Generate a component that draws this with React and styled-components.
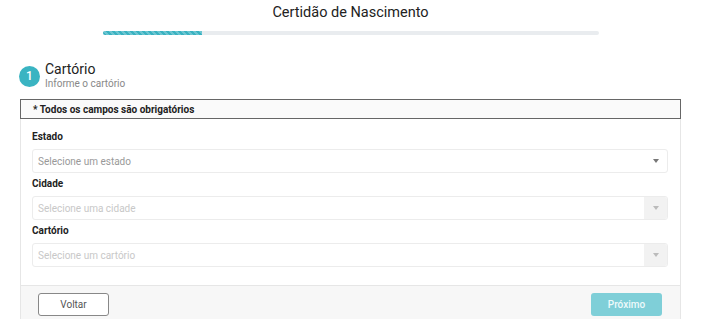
import React from 'react'
import styled, { createGlobalStyle } from 'styled-components'

const GlobalStyle = createGlobalStyle`
  body {
    margin: 0;
    background: #fff;
    font-family: Roboto, "Liberation Sans", Arial, sans-serif;
    color: #333;
  }
`;

const fields = [
  { label: 'Estado', placeholder: 'Selecione um estado', disabled: false },
  { label: 'Cidade', placeholder: 'Selecione uma cidade', disabled: true },
  { label: 'Cartório', placeholder: 'Selecione um cartório', disabled: true },
];

const App = () => {
  return (
    <Page>
      <GlobalStyle />
      <Title>Certidão de Nascimento</Title>
      <Progress>
        <ProgressFill percent={20} />
      </Progress>

      <StepHeader>
        <StepNumber>1</StepNumber>
        <StepText>
          <StepTitle>Cartório</StepTitle>
          <StepSubtitle>Informe o cartório</StepSubtitle>
        </StepText>
      </StepHeader>

      <Panel>
        <Required>* Todos os campos são obrigatórios</Required>
        <PanelBody>
          {fields.map((f) => (
            <Field key={f.label}>
              <Label>{f.label}</Label>
              <Select disabled={f.disabled}>
                <Placeholder disabled={f.disabled}>{f.placeholder}</Placeholder>
                <Arrow disabled={f.disabled}>
                  <svg width="6" height="4" viewBox="0 0 6 4">
                    <path d="M0 0 L6 0 L3 4 Z" fill="currentColor" />
                  </svg>
                </Arrow>
              </Select>
            </Field>
          ))}
        </PanelBody>
        <Footer>
          <BackButton>Voltar</BackButton>
          <NextButton>Próximo</NextButton>
        </Footer>
      </Panel>
    </Page>
  )
}

const Page = styled.div`
  width: 704px;
  box-sizing: border-box;
  padding: 4px 23px 0 20px;
`;

const Title = styled.h1`
  margin: 0;
  text-align: center;
  font-size: 14.5px;
  font-weight: 400;
  line-height: 17px;
  color: #222;
`;

const Progress = styled.div`
  width: 496px;
  height: 4px;
  margin: 10px auto 0;
  border-radius: 2px;
  background: #e9ecef;
  overflow: hidden;
`;

const ProgressFill = styled.div`
  width: ${(p) => p.percent}%;
  height: 100%;
  background-color: #39b2c1;
  background-image: linear-gradient(
    45deg,
    rgba(255, 255, 255, 0.25) 25%,
    transparent 25%,
    transparent 50%,
    rgba(255, 255, 255, 0.25) 50%,
    rgba(255, 255, 255, 0.25) 75%,
    transparent 75%,
    transparent
  );
  background-size: 6px 6px;
`;

const StepHeader = styled.div`
  display: flex;
  align-items: center;
  gap: 5px;
  margin-top: 27px;
  margin-left: -1px;
`;

const StepNumber = styled.div`
  width: 21px;
  height: 21px;
  border-radius: 50%;
  background: #3ab4c2;
  color: #fff;
  font-size: 12px;
  font-weight: 500;
  display: flex;
  align-items: center;
  justify-content: center;
`;

const StepText = styled.div`
  display: flex;
  flex-direction: column;
`;

const StepTitle = styled.div`
  font-size: 14px;
  line-height: 15px;
  color: #222;
`;

const StepSubtitle = styled.div`
  font-size: 10px;
  line-height: 13px;
  color: #888;
`;

const Panel = styled.div`
  margin-top: 9px;
  border-left: 1px solid #e6e6e6;
  border-right: 1px solid #e6e6e6;
`;

const Required = styled.div`
  margin: 0 -1px;
  height: 18px;
  border: 1px solid #666;
  background: #fafafa;
  font-size: 10px;
  font-weight: 700;
  color: #222;
  display: flex;
  align-items: center;
  padding-left: 12px;
`;

const PanelBody = styled.div`
  padding: 12px 12px 18px 11px;
  display: flex;
  flex-direction: column;
  gap: 5px;
`;

const Field = styled.div`
  display: flex;
  flex-direction: column;
  gap: 6px;
`;

const Label = styled.div`
  font-size: 10px;
  font-weight: 700;
  line-height: 12px;
  color: #222;
`;

const Select = styled.div`
  height: 22px;
  border: 1px solid #ececec;
  border-radius: 3px;
  background: #fff;
  display: flex;
  align-items: center;
  justify-content: space-between;
  overflow: hidden;
`;

const Placeholder = styled.span`
  padding-left: 5px;
  font-size: 10px;
  color: ${(p) => (p.disabled ? '#c8c8c8' : '#999')};
`;

const Arrow = styled.span`
  width: 23px;
  height: 100%;
  display: flex;
  align-items: center;
  justify-content: center;
  background: ${(p) => (p.disabled ? '#f2f2f2' : 'transparent')};
  color: ${(p) => (p.disabled ? '#bbb' : '#777')};
`;

const Footer = styled.div`
  border-top: 1px solid #e6e6e6;
  background: #f7f7f7;
  padding: 7px 18px 5px 17px;
  display: flex;
  justify-content: space-between;
`;

const BackButton = styled.button`
  width: 71px;
  height: 23px;
  border: 1px solid #888;
  border-radius: 3px;
  background: #fff;
  font-family: inherit;
  font-size: 10px;
  color: #555;
`;

const NextButton = styled.button`
  width: 71px;
  height: 23px;
  border: none;
  border-radius: 3px;
  background: #7fcfd8;
  font-family: inherit;
  font-size: 10px;
  font-weight: 500;
  color: #eefafb;
`;

export default App
